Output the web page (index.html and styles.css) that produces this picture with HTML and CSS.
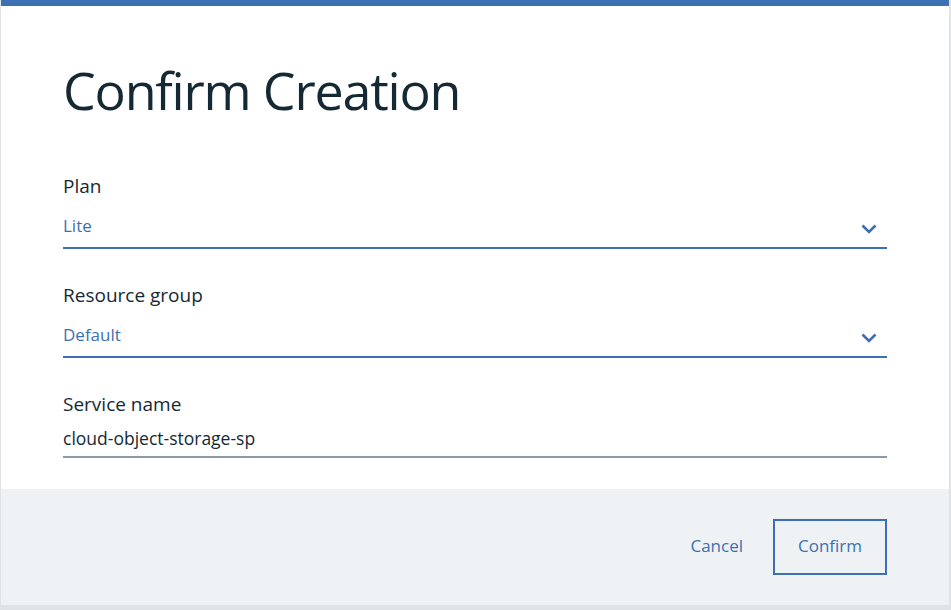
FILE: index.html
```html
<!DOCTYPE html>
<html lang="en">
<head>
<meta charset="utf-8">
<title>Confirm Creation</title>
<link rel="stylesheet" href="styles.css">
</head>
<body>
<div class="modal">
  <div class="modal-body">
    <h1 class="title">Confirm Creation</h1>
    <div class="field">
      <div class="label">Plan</div>
      <div class="select">
        <span class="select-value">Lite</span>
        <svg class="chevron" width="16" height="10" viewBox="0 0 16 10"><polyline points="1.5,1.5 8,8 14.5,1.5" fill="none" stroke="#3d70b2" stroke-width="2.6"/></svg>
      </div>
    </div>
    <div class="field">
      <div class="label">Resource group</div>
      <div class="select">
        <span class="select-value">Default</span>
        <svg class="chevron" width="16" height="10" viewBox="0 0 16 10"><polyline points="1.5,1.5 8,8 14.5,1.5" fill="none" stroke="#3d70b2" stroke-width="2.6"/></svg>
      </div>
    </div>
    <div class="field">
      <div class="label">Service name</div>
      <div class="input">cloud-object-storage-sp</div>
    </div>
  </div>
  <div class="modal-footer">
    <button class="btn-ghost">Cancel</button>
    <button class="btn-secondary">Confirm</button>
  </div>
</div>
</body>
</html>
```
FILE: styles.css
```css
html, body {
  margin: 0;
  padding: 0;
  background: #dfe3e6;
  height: 610px;
  overflow: hidden;
}
body {
  font-family: "Open Sans", "Noto Sans", sans-serif;
  color: #152935;
}
.modal {
  margin-left: 1px;
  width: 948px;
  height: 599px;
  background: #ffffff;
  border-top: 6px solid #3d70b2;
  display: flex;
  flex-direction: column;
}
.modal-body {
  flex: 1;
  min-height: 0;
  padding: 52px 62px 0 62px;
}
.title {
  margin: 0 0 52px 0;
  font-size: 52px;
  line-height: 64px;
  font-weight: 400;
  color: #152935;
  letter-spacing: -1.2px;
}
.field {
  margin-bottom: 34px;
}
.label {
  font-size: 19px;
  line-height: 24px;
  color: #152935;
}
.select {
  margin-top: 16px;
  padding-bottom: 9px;
  border-bottom: 2px solid #3d70b2;
  display: flex;
  align-items: center;
  justify-content: space-between;
  line-height: 24px;
}
.select-value {
  font-size: 17px;
  color: #3d70b2;
}
.chevron {
  margin-right: 10px;
  margin-top: 6px;
}
.input {
  margin-top: 10px;
  padding-bottom: 6px;
  border-bottom: 2px solid #8c9ba5;
  font-size: 17.5px;
  line-height: 24px;
  color: #152935;
}
.modal-footer {
  flex-shrink: 0;
  height: 116px;
  background: #eff2f5;
  display: flex;
  align-items: center;
  justify-content: flex-end;
  padding: 0 62px;
  gap: 18px;
}
.btn-ghost {
  font-family: inherit;
  font-size: 17px;
  color: #3d70b2;
  background: none;
  border: none;
  padding: 0 12px 3px;
  height: 56px;
}
.btn-secondary {
  font-family: inherit;
  font-size: 17px;
  color: #3d70b2;
  background: transparent;
  border: 2px solid #3d70b2;
  width: 114px;
  height: 56px;
  padding: 0 0 3px;
}
```
